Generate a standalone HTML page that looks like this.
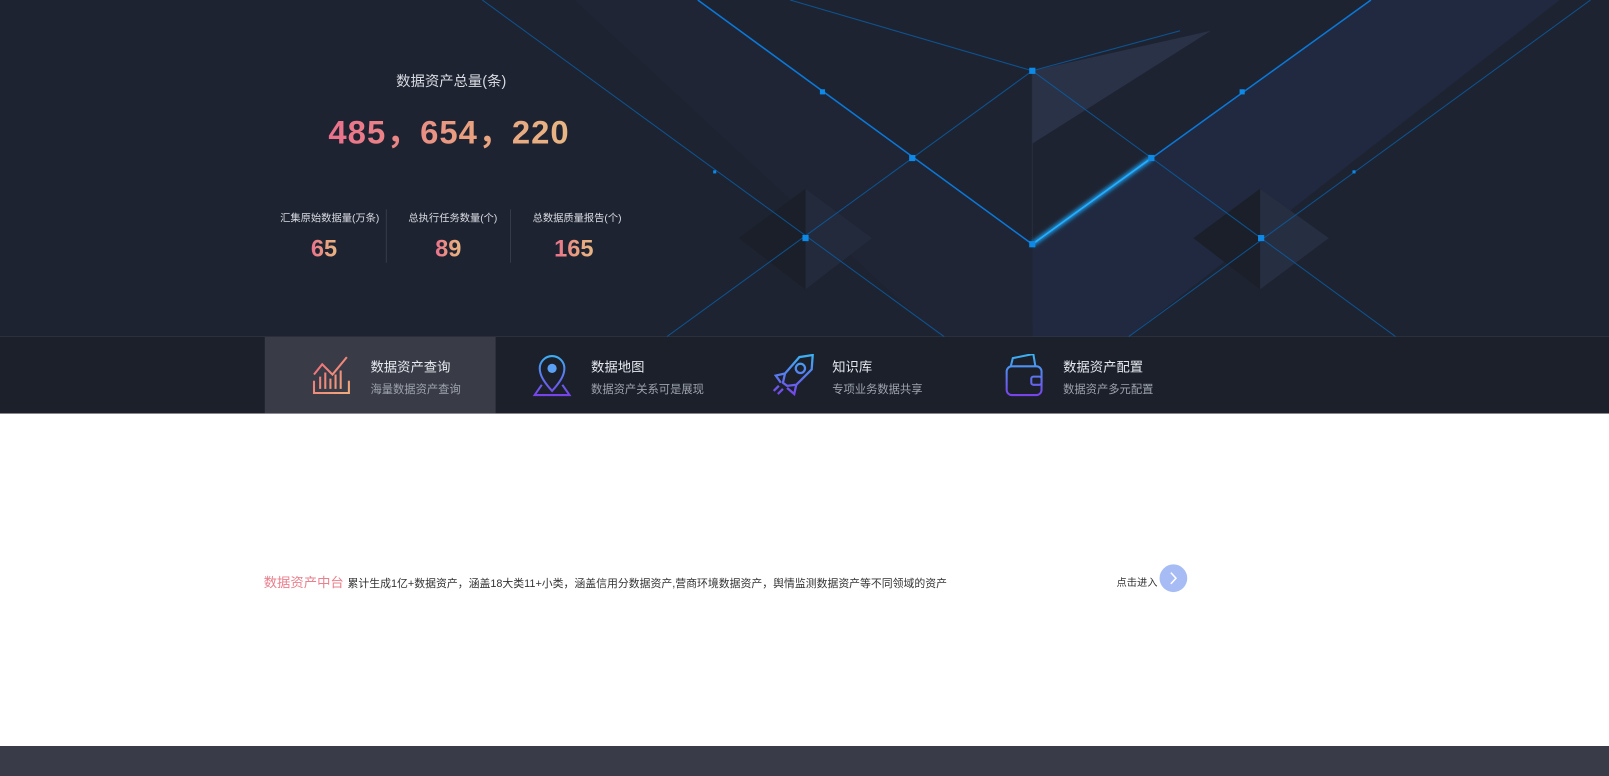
<!DOCTYPE html>
<html><head><meta charset="utf-8"><style>
*{margin:0;padding:0;box-sizing:border-box}
body{width:1609px;height:772px;overflow:hidden;font-family:"Liberation Sans","Noto Sans CJK SC",sans-serif;background:#fff;position:relative}
#w{position:absolute;left:0;top:0;width:1568px;height:753px;transform:scale(1.02615);transform-origin:0 0}
.hero{position:absolute;left:0;top:0;width:1568px;height:328px;background:#1e2331;overflow:hidden}
.bar{position:absolute;left:0;top:328px;width:1568px;height:75px;background:#1b202b}
.grad{background:linear-gradient(90deg,#ea6f8c,#e9a17f 60%,#e8b684);-webkit-background-clip:text;background-clip:text;color:transparent;font-weight:bold}
.t{position:absolute;color:#d8dbe2;white-space:nowrap}
.tab{position:absolute;top:328px;height:75px;width:225px}
.tab .h{position:absolute;left:103px;top:19px;font-size:13px;color:#e6e8ee}
.tab .s{position:absolute;left:103px;top:43px;font-size:11px;color:#9ea3ae}
.tab svg{position:absolute;left:44px;top:17px}
</style></head><body>
<div style="position:absolute;left:0;top:746px;width:1609px;height:30px;background:#393b49"></div>
<div id="w">
<div class="hero">
<svg width="1568" height="328" style="position:absolute;left:0;top:0">
<defs><filter id="g"><feGaussianBlur stdDeviation="2"/></filter></defs>
<polygon points="1006,69 1180,30 1006,140" fill="#2a3248"/>
<polygon points="1006,238 1336,0 1520,0 1100,328 1006,328" fill="#212b44" opacity=".8"/>
<polygon points="560,0 680,0 1006,238 1006,328 915,328" fill="#1f2738" opacity=".7"/>
<polygon points="720,232 785,184 850,232 785,282" fill="#1a1f2a"/>
<polygon points="785,184 850,232 785,282" fill="#232a3c"/>
<polygon points="1163,232 1228,184 1295,232 1228,282" fill="#1a1f2a"/>
<polygon points="1228,184 1295,232 1228,282" fill="#262e42"/>
<g stroke="#0a5fa8" stroke-width="1" fill="none" opacity=".8">
<line x1="1006" y1="69" x2="650" y2="328"/>
<line x1="1006" y1="69" x2="1360" y2="328"/>
<line x1="470" y1="0" x2="920" y2="328"/>
<line x1="1550" y1="0" x2="1100" y2="328"/>
<line x1="1006" y1="69" x2="770" y2="0"/>
<line x1="1006" y1="69" x2="1150" y2="30"/>
<line x1="1006" y1="69" x2="1006" y2="238" stroke="#2a3246"/>
</g>
<polyline points="680,0 1006,238" stroke="#0a78d8" stroke-width="1.5" fill="none"/>
<polyline points="1006,238 1336,0" stroke="#0a78d8" stroke-width="1.5" fill="none"/>
<polyline points="1006,238 1122,154" stroke="#1aa8ff" stroke-width="4" fill="none" filter="url(#g)"/>
<polyline points="1006,238 1122,154" stroke="#22b0ff" stroke-width="1.5" fill="none"/>
<g fill="#0d8ae8">
<rect x="1003" y="66" width="6" height="6"/><rect x="1003" y="235" width="6" height="6"/>
<rect x="886" y="151" width="6" height="6"/><rect x="1119" y="151" width="6" height="6"/>
<rect x="799" y="87" width="5" height="5"/><rect x="1208" y="87" width="5" height="5"/>
<rect x="782" y="229" width="6" height="6"/><rect x="1226" y="229" width="6" height="6"/>
<rect x="695" y="166" width="3" height="3"/><rect x="1318" y="166" width="3" height="3"/>
</g>
</svg>
<div class="t" style="left:386px;top:69px;font-size:14px">数据资产总量(条)</div>
<div class="grad" style="position:absolute;left:320px;top:104px;font-size:32px;white-space:nowrap;letter-spacing:1px">485，654，220</div>
<div class="t" style="left:273px;top:204px;font-size:10px">汇集原始数据量(万条)</div>
<div class="t" style="left:398px;top:204px;font-size:10px">总执行任务数量(个)</div>
<div class="t" style="left:519px;top:204px;font-size:10px">总数据质量报告(个)</div>
<div style="position:absolute;left:376px;top:204px;width:1px;height:52px;background:#353b4a"></div>
<div style="position:absolute;left:497px;top:204px;width:1px;height:52px;background:#353b4a"></div>
<div class="grad" style="position:absolute;left:303px;top:229px;font-size:23px">65</div>
<div class="grad" style="position:absolute;left:424px;top:229px;font-size:23px">89</div>
<div class="grad" style="position:absolute;left:540px;top:229px;font-size:23px">165</div>
</div>
<div class="bar"></div>
<svg width="0" height="0" style="position:absolute"><defs>
<linearGradient id="a" gradientUnits="userSpaceOnUse" x1="0" y1="0" x2="42" y2="42"><stop offset="0" stop-color="#f0607a"/><stop offset="1" stop-color="#f0b37c"/></linearGradient>
<linearGradient id="b" gradientUnits="userSpaceOnUse" x1="0" y1="0" x2="0" y2="42"><stop offset="0" stop-color="#3ab4f4"/><stop offset="1" stop-color="#7a3ee8"/></linearGradient>
</defs></svg>
<div class="tab" style="left:258px;background:#393c47">
<svg width="42" height="42" viewBox="0 0 42 42" fill="none" stroke="url(#a)" stroke-width="2"><polyline points="4,20 12,10 22,20 36,3"/><line x1="10" y1="22" x2="10" y2="34"/><line x1="15" y1="18" x2="15" y2="34"/><line x1="20" y1="24" x2="20" y2="34"/><line x1="25" y1="20" x2="25" y2="34"/><line x1="30" y1="16" x2="30" y2="34"/><polyline points="4,26 4,38 38,38 38,26"/></svg>
<div class="h">数据资产查询</div><div class="s">海量数据资产查询</div></div>
<div class="tab" style="left:473px">
<svg width="42" height="42" viewBox="0 0 42 42" fill="none" stroke="url(#b)" stroke-width="2"><path d="M21 36 C12 26 9 20 9 14 A12 12 0 0 1 33 14 C33 20 30 26 21 36Z"/><circle cx="21" cy="14" r="4.5" fill="#5aa0f4" stroke="none"/><polyline points="11,30 4,40 38,40 31,30"/></svg>
<div class="h">数据地图</div><div class="s">数据资产关系可是展现</div></div>
<div class="tab" style="left:708px">
<svg width="42" height="42" viewBox="0 0 42 42" fill="none" stroke="url(#b)" stroke-width="2.2"><path d="M40 1 L27 3 L13 19 L11 28 L15 31 L24 30 L39 15 Z"/><circle cx="28" cy="14" r="4.5"/><path d="M13 19 L4 21 L9 28 M24 30 L22 39 L15 33"/><line x1="6" y1="39" x2="11" y2="34"/><line x1="2" y1="36" x2="7" y2="31"/></svg>
<div class="h">知识库</div><div class="s">专项业务数据共享</div></div>
<div class="tab" style="left:933px">
<svg width="42" height="42" viewBox="0 0 42 42" fill="none" stroke="url(#b)" stroke-width="2"><rect x="4" y="12" width="34" height="28" rx="5"/><path d="M8 12 L10 4 L30 0 L32 12"/><rect x="28" y="22" width="10" height="8" rx="2"/></svg>
<div class="h">数据资产配置</div><div class="s">数据资产多元配置</div></div>
<div style="position:absolute;left:257px;top:557px;font-size:13px;color:#e9808e;white-space:nowrap">数据资产中台 <span style="font-size:10.6px;color:#333">累计生成1亿+数据资产，涵盖18大类11+小类，涵盖信用分数据资产,营商环境数据资产，舆情监测数据资产等不同领域的资产</span></div>
<div style="position:absolute;left:1088px;top:559px;font-size:10px;color:#333">点击进入</div>
<div style="position:absolute;left:1130px;top:550px;width:27px;height:27px;border-radius:50%;background:#a7bcf4"><svg width="27" height="27"><polyline points="11,8 16,13.5 11,19" stroke="#fff" stroke-width="1.5" fill="none"/></svg></div>
</div>
</body></html>
